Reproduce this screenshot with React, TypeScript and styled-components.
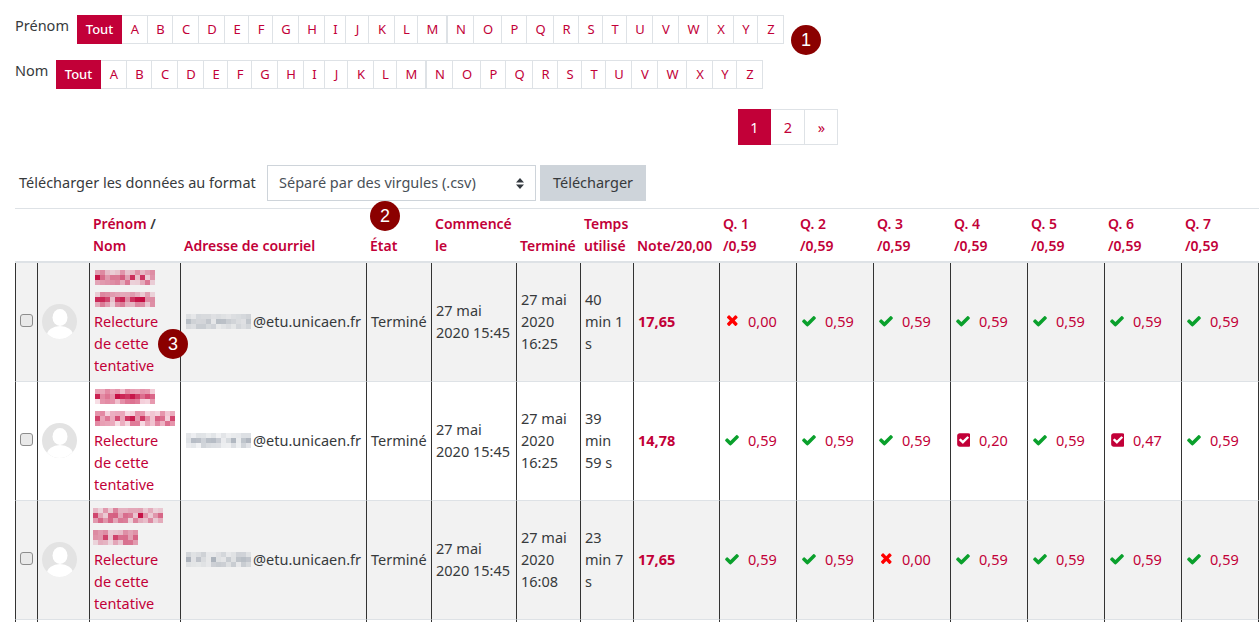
import React from 'react'
import styled, { createGlobalStyle } from 'styled-components'

const CRIMSON = '#c20038'

const GlobalStyle = createGlobalStyle`
  html, body {
    margin: 0;
    padding: 0;
    background: #fff;
    overflow: hidden;
    height: 622px;
  }
  body {
    font-family: "Noto Sans", "Open Sans", sans-serif;
    font-size: 14.5px;
    line-height: 22px;
    color: #373a3c;
  }
`

const LETTER_WIDTHS: Record<string, number> = {
  A: 26, B: 25, C: 26, D: 26, E: 24, F: 24, G: 26, H: 26, I: 21, J: 23, K: 26, L: 23, M: 29,
  N: 27, O: 28, P: 25, Q: 27, R: 25, S: 24, T: 24, U: 26, V: 26, W: 29, X: 26, Y: 24, Z: 26,
}

const rand = (seed: number) => {
  let s = seed
  return () => {
    s = (s * 9301 + 49297) % 233280
    return s / 233280
  }
}

const MosaicSvg = styled.svg<{ $dx: number }>`
  display: block;
  margin-left: ${(p) => p.$dx}px;
  flex: none;
`

const Mosaic = ({ seed, cols, gray, dx = 0 }: { seed: number; cols: number; gray?: boolean; dx?: number }) => {
  const r = rand(seed)
  const cells = []
  const weight = [0.35, 0.85, 0.45]
  for (let y = 0; y < 3; y++) {
    for (let x = 0; x < cols; x++) {
      const a = r() * weight[y] * (gray ? 0.55 : 1) + (gray ? 0.08 : 0.12)
      cells.push(
        <rect key={`${x}-${y}`} x={x * 5} y={y * 5} width={5} height={5} fill={gray ? '#6f7b8c' : CRIMSON} opacity={a} />,
      )
    }
  }
  return (
    <MosaicSvg $dx={dx} width={cols * 5} height={15}>
      {cells}
    </MosaicSvg>
  )
}

const Page = styled.div`
  width: 1259px;
  height: 622px;
  overflow: hidden;
  position: relative;
  padding: 15px 0 0 15px;
  box-sizing: border-box;
`

const InitialBar = styled.div`
  display: flex;
  height: 29px;
  margin-bottom: 16px;
`

const InitialLabel = styled.span<{ $w: number }>`
  width: ${(p) => p.$w}px;
  line-height: 20px;
`

const LetterLink = styled.a<{ $w: number; $active?: boolean; $double?: boolean }>`
  box-sizing: border-box;
  width: ${(p) => p.$w}px;
  height: 29px;
  padding: 0 0 1px 1px;
  display: flex;
  align-items: center;
  justify-content: center;
  font-size: 13px;
  border: 1px solid #dee2e6;
  border-left: ${(p) => (p.$double ? '1px solid #dee2e6' : 'none')};
  color: ${(p) => (p.$active ? '#fff' : CRIMSON)};
  background: ${(p) => (p.$active ? CRIMSON : '#fff')};
  font-weight: ${(p) => (p.$active ? 500 : 400)};
  ${(p) => p.$active && `border-color: ${CRIMSON};`}
`

const Pagination = styled.div`
  width: 823px;
  display: flex;
  justify-content: flex-end;
  margin-top: 20px;
  margin-bottom: 20px;
`

const PageLink = styled.a<{ $w: number; $active?: boolean }>`
  box-sizing: border-box;
  width: ${(p) => p.$w}px;
  height: 36px;
  padding-left: 1px;
  display: flex;
  align-items: center;
  justify-content: center;
  border: 1px solid #dee2e6;
  border-left: none;
  color: ${(p) => (p.$active ? '#fff' : CRIMSON)};
  background: ${(p) => (p.$active ? CRIMSON : '#fff')};
  ${(p) => p.$active && `border-color: ${CRIMSON};`}
`

const DownloadRow = styled.div`
  display: flex;
  align-items: center;
  height: 36px;
  padding-left: 4px;
  margin-bottom: 7px;
`

const DownloadLabel = styled.span`
  width: 248px;
  padding-bottom: 2px;
`

const SelectWrap = styled.div`
  position: relative;
  width: 269px;
  height: 36px;
`

const FormatSelect = styled.select`
  appearance: none;
  box-sizing: border-box;
  width: 100%;
  height: 100%;
  border: 1px solid #ced4da;
  background: #fff;
  color: #495057;
  font: inherit;
  padding: 0 11px 2px;
  border-radius: 0;
`

const SelectArrows = styled.svg`
  position: absolute;
  right: 12px;
  top: 13px;
  pointer-events: none;
`

const DownloadButton = styled.button`
  width: 106px;
  height: 36px;
  margin-left: 4px;
  border: none;
  background: #ced4da;
  color: #373a3c;
  font: inherit;
  padding: 0 0 2px;
`

const Grid = styled.table`
  table-layout: fixed;
  width: 1244px;
  border-collapse: separate;
  border-spacing: 0;
`

const HeadCell = styled.th`
  box-sizing: border-box;
  height: 55px;
  padding: 4px 4px 4px 4px;
  text-align: left;
  vertical-align: bottom;
  white-space: nowrap;
  font-size: 14px;
  font-weight: 600;
  color: ${CRIMSON};
  border-top: 1px solid #dee2e6;
  border-bottom: 2px solid #dee2e6;
`

const HeadDivider = styled.span`
  color: #373a3c;
`

const Row = styled.tr<{ $striped: boolean }>`
  background: ${(p) => (p.$striped ? '#f2f2f2' : '#fff')};
`

const Cell = styled.td`
  box-sizing: border-box;
  height: 119px;
  padding: 3px 0 5px 4px;
  vertical-align: middle;
  white-space: nowrap;
  border-left: 1px solid #333;
  border-bottom: 1px solid #dee2e6;
  &:last-child {
    border-right: 1px solid #333;
  }
`

const CheckCell = styled(Cell)`
  padding: 0 0 4px 4px;
`

const AvatarCell = styled(Cell)`
  padding: 0 0 2px 4px;
`

const RowCheck = styled.input`
  appearance: none;
  display: block;
  box-sizing: border-box;
  width: 13px;
  height: 13px;
  margin: 0;
  background: #e9e9e9;
  border: 1px solid #8d8d8d;
  border-radius: 3px;
`

const Avatar = styled.svg`
  display: block;
`

const NameLine = styled.div`
  height: 22px;
  display: flex;
  align-items: center;
`

const ReviewLink = styled.a`
  display: block;
  color: ${CRIMSON};
`

const Email = styled.div`
  display: flex;
  align-items: center;
  gap: 2px;
`

const Note = styled.b`
  color: ${CRIMSON};
  font-weight: 700;
`

const Grade = styled.div`
  display: flex;
  align-items: center;
  color: ${CRIMSON};
`

const GradeIcon = styled.span<{ $color: string }>`
  width: 16px;
  margin-right: 8px;
  display: flex;
  justify-content: center;
  color: ${(p) => p.$color};
`

const Marker = styled.span<{ $x: number; $y: number }>`
  position: absolute;
  left: ${(p) => p.$x - 15}px;
  top: ${(p) => p.$y - 15}px;
  width: 30px;
  height: 30px;
  border-radius: 50%;
  background: #8b0000;
  color: #fff;
  display: flex;
  align-items: center;
  justify-content: center;
  font-family: "Liberation Sans", sans-serif;
  font-size: 18px;
`

const COLUMNS = [22, 52, 91, 186, 65, 85, 64, 53, 86, 77, 77, 77, 77, 77, 77, 78]

type Mark = 'ok' | 'no' | 'part'

const GradeMark = ({ mark }: { mark: Mark }) => {
  if (mark === 'no') {
    return (
      <GradeIcon $color="#f00">
        <svg width="12.6" height="16" viewBox="0 0 1408 1792" fill="currentColor">
          <path d="M1298 1214q0 40-28 68l-136 136q-28 28-68 28t-68-28l-294-294-294 294q-28 28-68 28t-68-28l-136-136q-28-28-28-68t28-68l294-294-294-294q-28-28-28-68t28-68l136-136q28-28 68-28t68 28l294 294 294-294q28-28 68-28t68 28l136 136q28 28 28 68t-28 68l-294 294 294 294q28 28 28 68z" />
        </svg>
      </GradeIcon>
    )
  }
  if (mark === 'part') {
    return (
      <GradeIcon $color={CRIMSON}>
        <svg width="14.9" height="16" viewBox="0 0 1664 1792" fill="currentColor">
          <path d="M813 1299l614-614q19-19 19-45t-19-45l-102-102q-19-19-45-19t-45 19l-467 467-211-211q-19-19-45-19t-45 19l-102 102q-19 19-19 45t19 45l358 358q19 19 45 19t45-19zm851-883v960q0 119-84.5 203.5t-203.5 84.5h-960q-119 0-203.5-84.5t-84.5-203.5v-960q0-119 84.5-203.5t203.5-84.5h960q119 0 203.5 84.5t84.5 203.5z" />
        </svg>
      </GradeIcon>
    )
  }
  return (
    <GradeIcon $color="#0aa02c">
      <svg width="16" height="16" viewBox="0 0 1792 1792" fill="currentColor">
        <path d="M1671 566q0 40-28 68l-724 724-136 136q-28 28-68 28t-68-28l-136-136-362-362q-28-28-28-68t28-68l136-136q28-28 68-28t68 28l294 295 656-657q28-28 68-28t68 28l136 136q28 28 28 68z" />
      </svg>
    </GradeIcon>
  )
}

const ROWS = [
  {
    name: [{ seed: 11, cols: 12, dx: 1 }, { seed: 23, cols: 12, dx: 1 }],
    mail: 4,
    termine: ['27 mai', '2020', '16:25'],
    temps: ['40', 'min 1', 's'],
    note: '17,65',
    grades: [['no', '0,00'], ['ok', '0,59'], ['ok', '0,59'], ['ok', '0,59'], ['ok', '0,59'], ['ok', '0,59'], ['ok', '0,59']],
  },
  {
    name: [{ seed: 37, cols: 12, dx: 1 }, { seed: 41, cols: 16, dx: 1 }],
    mail: 9,
    termine: ['27 mai', '2020', '16:25'],
    temps: ['39', 'min', '59 s'],
    note: '14,78',
    grades: [['ok', '0,59'], ['ok', '0,59'], ['ok', '0,59'], ['part', '0,20'], ['ok', '0,59'], ['part', '0,47'], ['ok', '0,59']],
  },
  {
    name: [{ seed: 53, cols: 14, dx: -1 }, { seed: 67, cols: 9, dx: -1 }],
    mail: 15,
    termine: ['27 mai', '2020', '16:08'],
    temps: ['23', 'min 7', 's'],
    note: '17,65',
    grades: [['ok', '0,59'], ['ok', '0,59'], ['no', '0,00'], ['ok', '0,59'], ['ok', '0,59'], ['ok', '0,59'], ['ok', '0,59']],
  },
]

const Lines = ({ items }: { items: string[] }) => (
  <>
    {items.map((t, i) => (
      <div key={i}>{t}</div>
    ))}
  </>
)

const Initials = ({ label, w }: { label: string; w: number }) => (
  <InitialBar>
    <InitialLabel $w={w}>{label}</InitialLabel>
    <LetterLink $w={45} $active>Tout</LetterLink>
    {Object.keys(LETTER_WIDTHS).map((l) => (
      <LetterLink key={l} $w={LETTER_WIDTHS[l]} $double={l === 'N'}>{l}</LetterLink>
    ))}
  </InitialBar>
)

const App = () => (
  <Page>
    <GlobalStyle />
    <Initials label="Prénom" w={62} />
    <Initials label="Nom" w={41} />
    <Pagination>
      <PageLink $w={33} $active>1</PageLink>
      <PageLink $w={34}>2</PageLink>
      <PageLink $w={33}>»</PageLink>
    </Pagination>
    <DownloadRow>
      <DownloadLabel>Télécharger les données au format</DownloadLabel>
      <SelectWrap>
        <FormatSelect defaultValue="csv">
          <option value="csv">Séparé par des virgules (.csv)</option>
        </FormatSelect>
        <SelectArrows width="8" height="11" viewBox="0 0 8 11">
          <path d="M4 0 8 4.4H0zM4 11 0 6.6h8z" fill="#343a40" />
        </SelectArrows>
      </SelectWrap>
      <DownloadButton>Télécharger</DownloadButton>
    </DownloadRow>
    <Grid>
      <colgroup>
        {COLUMNS.map((w, i) => (
          <col key={i} width={w} />
        ))}
      </colgroup>
      <thead>
        <tr>
          <HeadCell />
          <HeadCell />
          <HeadCell>Prénom <HeadDivider>/</HeadDivider><br />Nom</HeadCell>
          <HeadCell>Adresse de courriel</HeadCell>
          <HeadCell>État</HeadCell>
          <HeadCell>Commencé<br />le</HeadCell>
          <HeadCell>Terminé</HeadCell>
          <HeadCell>Temps<br />utilisé</HeadCell>
          <HeadCell>Note/20,00</HeadCell>
          {[1, 2, 3, 4, 5, 6, 7].map((q) => (
            <HeadCell key={q}>Q. {q}<br />/0,59</HeadCell>
          ))}
        </tr>
      </thead>
      <tbody>
        {ROWS.map((row, i) => (
          <Row key={i} $striped={i % 2 === 0}>
            <CheckCell><RowCheck type="checkbox" /></CheckCell>
            <AvatarCell>
              <Avatar width="35" height="35" viewBox="0 0 35 35">
                <defs>
                  <clipPath id={`av${i}`}><circle cx="17.5" cy="17.5" r="17.5" /></clipPath>
                </defs>
                <circle cx="17.5" cy="17.5" r="17.5" fill="#e3e3e3" />
                <g clipPath={`url(#av${i})`} fill="#fff">
                  <ellipse cx="18" cy="13.5" rx="7.5" ry="8.5" />
                  <ellipse cx="18" cy="31" rx="13" ry="9" />
                </g>
              </Avatar>
            </AvatarCell>
            <Cell>
              {row.name.map((n) => (
                <NameLine key={n.seed}><Mosaic seed={n.seed} cols={n.cols} dx={n.dx} /></NameLine>
              ))}
              <ReviewLink>Relecture</ReviewLink>
              <ReviewLink>de cette</ReviewLink>
              <ReviewLink>tentative</ReviewLink>
            </Cell>
            <Cell>
              <Email><Mosaic seed={row.mail} cols={13} dx={1} gray />@etu.unicaen.fr</Email>
            </Cell>
            <Cell>Terminé</Cell>
            <Cell><Lines items={['27 mai', '2020 15:45']} /></Cell>
            <Cell><Lines items={row.termine} /></Cell>
            <Cell><Lines items={row.temps} /></Cell>
            <Cell><Note>{row.note}</Note></Cell>
            {row.grades.map(([mark, value], g) => (
              <Cell key={g}>
                <Grade><GradeMark mark={mark as Mark} />{value}</Grade>
              </Cell>
            ))}
          </Row>
        ))}
        <tr>
          {COLUMNS.map((_, i) => (
            <Cell key={i} />
          ))}
        </tr>
      </tbody>
    </Grid>
    <Marker $x={806} $y={40}>1</Marker>
    <Marker $x={385} $y={216}>2</Marker>
    <Marker $x={173} $y={344}>3</Marker>
  </Page>
)

export default App
